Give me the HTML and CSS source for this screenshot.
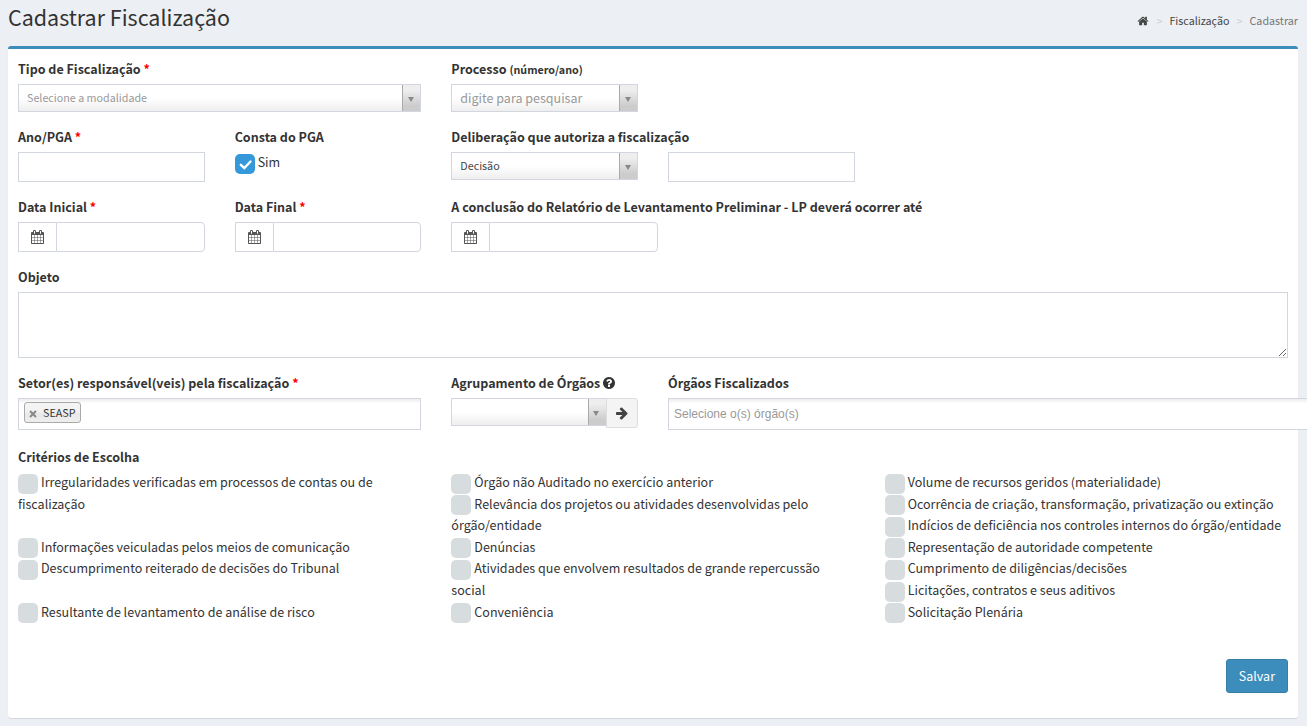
FILE: index.html
```html
<!DOCTYPE html>
<html lang="pt-BR">
<head>
<meta charset="utf-8">
<title>Cadastrar Fiscalização</title>
<link rel="stylesheet" href="styles.css">
</head>
<body>
<svg class="sprite" aria-hidden="true">
  <symbol id="i-home" viewBox="0 0 1664 1792"><path d="M1408 992v480q0 26-19 45t-45 19h-384v-384h-256v384h-384q-26 0-45-19t-19-45v-480q0-1 .5-3t.5-3l575-474 575 474q1 2 1 6zm223-69l-62 74q-8 9-21 11h-3q-13 0-21-7l-692-577-692 577q-12 8-24 7-13-2-21-11l-62-74q-8-10-7-23.5t11-21.5l719-599q32-26 76-26t76 26l244 204v-195q0-14 9-23t23-9h192q14 0 23 9t9 23v408l219 182q10 8 11 21.5t-7 23.5z"/></symbol>
  <symbol id="i-calendar" viewBox="64 0 1664 1792"><path d="M192 1664h288v-288h-288v288zm352 0h320v-288h-320v288zm-352-352h288v-320h-288v320zm352 0h320v-320h-320v320zm-352-384h288v-288h-288v288zm736 736h320v-288h-320v288zm-384-736h320v-288h-320v288zm768 736h288v-288h-288v288zm-384-352h320v-320h-320v320zm-352-864v-288q0-13-9.5-22.5t-22.5-9.5h-64q-13 0-22.500 9.500t-9.500 22.500v288q0 13 9.500 22.500t22.500 9.500h64q13 0 22.500-9.500t9.500-22.500zm736 864h288v-320h-288v320zm-384-384h320v-288h-320v288zm384 0h288v-288h-288v288zm32-480v-288q0-13-9.500-22.500t-22.500-9.500h-64q-13 0-22.500 9.500t-9.500 22.500v288q0 13 9.500 22.500t22.500 9.500h64q13 0 22.500-9.500t9.500-22.500zm384-64v1280q0 52-38 90t-90 38h-1408q-52 0-90-38t-38-90v-1280q0-52 38-90t90-38h128v-96q0-66 47-113t113-47h64q66 0 113 47t47 113v96h384v-96q0-66 47-113t113-47h64q66 0 113 47t47 113v96h128q52 0 90 38t38 90z"/></symbol>
  <symbol id="i-help" viewBox="128 0 1536 1792"><path d="M1024 1376v-192q0-14-9-23t-23-9h-192q-14 0-23 9t-9 23v192q0 14 9 23t23 9h192q14 0 23-9t9-23zm256-672q0-88-55.500-163t-138.500-116-170-41q-243 0-371 213-15 24 8 42l132 100q7 6 19 6 16 0 25-12 53-68 86-92 34-24 86-24 48 0 85.500 26t37.500 59q0 38-20 61t-68 45q-63 28-115.500 86.500t-52.500 125.500v36q0 14 9 23t23 9h192q14 0 23-9t9-23q0-19 21.500-49.500t54.500-49.500q32-18 49-28.500t46-35 44.500-48 28-60.500 12.500-81zm384 192q0 209-103 385.500t-279.500 279.500-385.500 103-385.500-103-279.500-279.500-103-385.500 103-385.500 279.500-279.500 385.500-103 385.500 103 279.500 279.500 103 385.500z"/></symbol>
  <symbol id="i-arrow" viewBox="0 0 1792 1792"><path d="M1600 960q0 54-37 91l-651 651q-39 37-91 37-51 0-90-37l-75-75q-38-38-38-91t38-91l293-293h-704q-52 0-84.500-37.500t-32.500-90.500v-128q0-53 32.500-90.500t84.500-37.500h704l-293-294q-38-36-38-90t38-90l75-75q38-38 90-38 53 0 91 38l651 651q37 35 37 90z"/></symbol>
</svg>

<header class="page-header">
  <h1 class="page-title">Cadastrar Fiscalização</h1>
  <nav class="breadcrumb" aria-label="Trilha">
    <a href="#" aria-label="Início"><svg class="icon-home"><use href="#i-home"/></svg></a>
    <span class="crumb-sep">&gt;</span>
    <a href="#">Fiscalização</a>
    <span class="crumb-sep">&gt;</span>
    <span class="crumb-current">Cadastrar</span>
  </nav>
</header>

<main class="box">
  <form class="form">
    <div class="row">
      <div class="field span-2">
        <label for="tipo">Tipo de Fiscalização <span class="req">*</span></label>
        <div class="select"><select id="tipo" class="placeholder"><option>Selecione a modalidade</option></select></div>
      </div>
      <div class="field">
        <label for="processo">Processo <small>(número/ano)</small></label>
        <div class="select"><select id="processo" class="placeholder search"><option>digite para pesquisar</option></select></div>
      </div>
    </div>

    <div class="row">
      <div class="field">
        <label for="ano">Ano/PGA <span class="req">*</span></label>
        <input id="ano" class="input" type="text">
      </div>
      <div class="field">
        <span class="caption">Consta do PGA</span>
        <label class="check"><input type="checkbox" checked>Sim</label>
      </div>
      <div class="field span-2 pair">
        <label for="deliberacao">Deliberação que autoriza a fiscalização</label>
        <div class="select"><select id="deliberacao"><option>Decisão</option></select></div>
        <input class="input" type="text" aria-label="Número da deliberação">
      </div>
    </div>

    <div class="row">
      <div class="field">
        <label for="inicio">Data Inicial <span class="req">*</span></label>
        <div class="date"><span class="addon"><svg class="icon icon-calendar"><use href="#i-calendar"/></svg></span><input id="inicio" class="input" type="text"></div>
      </div>
      <div class="field">
        <label for="fim">Data Final <span class="req">*</span></label>
        <div class="date"><span class="addon"><svg class="icon icon-calendar"><use href="#i-calendar"/></svg></span><input id="fim" class="input" type="text"></div>
      </div>
      <div class="field span-3">
        <label for="conclusao">A conclusão do Relatório de Levantamento Preliminar - LP deverá ocorrer até</label>
        <div class="date third"><span class="addon"><svg class="icon icon-calendar"><use href="#i-calendar"/></svg></span><input id="conclusao" class="input" type="text"></div>
      </div>
    </div>

    <div class="row">
      <div class="field span-6">
        <label for="objeto">Objeto</label>
        <textarea id="objeto" class="textarea"></textarea>
      </div>
    </div>

    <div class="row sectors">
      <div class="field span-2">
        <label for="setores">Setor(es) responsável(veis) pela fiscalização <span class="req">*</span></label>
        <div class="multi">
          <span class="chip"><button type="button" aria-label="Remover SEASP"><svg viewBox="0 0 8 8"><path d="M1 1l6 6M7 1L1 7"/></svg></button>SEASP</span>
          <input id="setores" type="text">
        </div>
      </div>
      <div class="field">
        <label for="grupo">Agrupamento de Órgãos <svg class="icon icon-help"><use href="#i-help"/></svg></label>
        <div class="group">
          <div class="select"><select id="grupo"><option></option></select></div>
          <button type="button" class="go" aria-label="Adicionar"><svg class="icon"><use href="#i-arrow"/></svg></button>
        </div>
      </div>
      <div class="field span-3 wide">
        <label for="orgaos">Órgãos Fiscalizados</label>
        <div class="multi"><input id="orgaos" type="text" placeholder="Selecione o(s) órgão(s)"></div>
      </div>
    </div>

    <fieldset class="criteria">
      <legend>Critérios de Escolha</legend>
      <div class="criteria-grid">
        <div class="column">
          <label class="check tall"><input type="checkbox">Irregularidades verificadas em processos de contas ou de fiscalização</label>
          <label class="check after-gap"><input type="checkbox">Informações veiculadas pelos meios de comunicação</label>
          <label class="check tall"><input type="checkbox">Descumprimento reiterado de decisões do Tribunal</label>
          <label class="check"><input type="checkbox">Resultante de levantamento de análise de risco</label>
        </div>
        <div class="column">
          <label class="check"><input type="checkbox">Órgão não Auditado no exercício anterior</label>
          <label class="check tall"><input type="checkbox">Relevância dos projetos ou atividades desenvolvidas pelo órgão/entidade</label>
          <label class="check"><input type="checkbox">Denúncias</label>
          <label class="check tall"><input type="checkbox">Atividades que envolvem resultados de grande repercussão social</label>
          <label class="check"><input type="checkbox">Conveniência</label>
        </div>
        <div class="column">
          <label class="check"><input type="checkbox">Volume de recursos geridos (materialidade)</label>
          <label class="check"><input type="checkbox">Ocorrência de criação, transformação, privatização ou extinção</label>
          <label class="check"><input type="checkbox">Indícios de deficiência nos controles internos do órgão/entidade</label>
          <label class="check"><input type="checkbox">Representação de autoridade competente</label>
          <label class="check"><input type="checkbox">Cumprimento de diligências/decisões</label>
          <label class="check"><input type="checkbox">Licitações, contratos e seus aditivos</label>
          <label class="check"><input type="checkbox">Solicitação Plenária</label>
        </div>
      </div>
    </fieldset>

    <div class="actions"><button type="submit" class="save">Salvar</button></div>
  </form>
</main>
</body>
</html>
```
FILE: styles.css
```css
* { box-sizing: border-box; }

/* font-size-adjust keeps the x-height of Source Sans Pro in its fallback */
body {
  margin: 0;
  padding: 0 9px 8px 8px;
  overflow-x: hidden;
  background: #ecf0f5;
  color: #333;
  font-family: "Source Sans Pro", "Noto Sans CJK SC", sans-serif;
  font-size: 14px;
  font-size-adjust: 0.486;
  line-height: 20px;
}

input, select, textarea, button { font: inherit; font-size-adjust: inherit; color: inherit; }

.sprite { position: absolute; width: 0; height: 0; }

.icon { width: 14px; height: 14px; fill: currentColor; vertical-align: -2px; }
.icon-calendar { width: 13px; }
.icon-help { width: 12px; }

.page-header {
  display: flex;
  justify-content: space-between;
  align-items: center;
  height: 46px;
  padding-bottom: 12px;
}

.page-title { margin: 0; font-size: 24px; font-weight: 400; line-height: 26px; }

.breadcrumb {
  display: flex;
  align-items: center;
  gap: 7px;
  padding-top: 8px;
  font-size: 12px;
}
.breadcrumb a { display: flex; color: #444; text-decoration: none; }
.icon-home { width: 12px; height: 12px; fill: #444; }
.crumb-sep { color: #ccc; }
.crumb-current { color: #777; }

.box {
  border-top: 3px solid #3c8dbc;
  border-radius: 3px;
  background: #fff;
  box-shadow: 0 1px 1px rgba(0, 0, 0, .1);
}

.form { padding: 10px 10px 25px; }

.row {
  display: grid;
  grid-template-columns: repeat(6, minmax(0, 1fr));
  column-gap: 30px;
  align-items: start;
  margin-bottom: 15px;
}
.sectors { margin-bottom: 17px; }

.span-2 { grid-column: span 2; }
.span-3 { grid-column: span 3; }
.span-6 { grid-column: span 6; }

.field > label, .caption, .criteria legend {
  display: block;
  margin-bottom: 5px;
  padding: 0;
  font-weight: 700;
  white-space: nowrap;
}
.field small { font-size: 12px; line-height: 12px; }
.req { color: #f00; }

.pair { display: grid; grid-template-columns: 1fr 1fr; column-gap: 30px; align-items: start; }
.pair > label { grid-column: span 2; }

.input {
  display: block;
  width: 100%;
  height: 30px;
  padding: 4px 8px;
  border: 1px solid #d2d6de;
  background: #fff;
}

.select { position: relative; }
.select select {
  display: block;
  width: 100%;
  height: 28px;
  padding: 0 26px 1px 8px;
  border: 1px solid #d2d6de;
  border-radius: 0;
  appearance: none;
  background:
    linear-gradient(#aaa, #aaa) right 17px top / 1px 100% no-repeat,
    linear-gradient(#eee 20%, #ccc 80%) right top / 17px 100% no-repeat,
    linear-gradient(#fff 20%, #fff 50%, #eee 100%);
  color: #444;
  font-size: 12px;
}
.select::after {
  content: "";
  position: absolute;
  top: 13px;
  right: 7px;
  border: 3px solid transparent;
  border-top: 5px solid #888;
  border-bottom: 0;
  pointer-events: none;
}
.select .placeholder { color: #999; }
.select .search { font-size: 14px; }

.date { display: flex; }
.date .input { border-radius: 0 4px 4px 0; }
.third { width: calc(100% / 3); }
.addon {
  display: flex;
  flex: 0 0 38px;
  align-items: center;
  justify-content: center;
  border: 1px solid #d2d6de;
  border-right: 0;
  color: #555;
}

.textarea {
  display: block;
  width: 100%;
  height: 66px;
  padding: 6px 12px;
  border: 1px solid #d2d6de;
}

.multi {
  display: flex;
  align-items: center;
  height: 32px;
  padding: 0 5px;
  border: 1px solid #d2d6de;
  background: linear-gradient(#eee 1%, #fff 15%) #fff;
}
.multi input {
  flex: 1;
  min-width: 0;
  padding: 0;
  border: 0;
  outline: 0;
  background: transparent;
  font-family: "Liberation Sans", Arial, sans-serif;
  font-size: 12px;
  font-size-adjust: none;
}
.multi input::placeholder { color: #999; }
.wide { margin-right: -45px; }

.chip {
  display: flex;
  align-items: center;
  gap: 6px;
  height: 21px;
  margin-bottom: 3px;
  padding: 0 5px 0 4px;
  border: 1px solid #aaa;
  border-radius: 3px;
  background: linear-gradient(#f4f4f4 20%, #f0f0f0 50%, #e8e8e8 52%, #eee 100%);
  font-size: 12px;
}
.chip button { display: flex; padding: 2px 0 0; border: 0; background: none; }
.chip svg { width: 8px; height: 8px; stroke: #888; stroke-width: 2; }

.group { display: flex; align-items: flex-start; }
.group .select { flex: 1; }
.group select { border-right: 0; }
.go {
  display: flex;
  align-items: center;
  justify-content: center;
  width: 32px;
  height: 30px;
  padding: 0;
  border: 1px solid #ddd;
  border-radius: 0 3px 3px 0;
  background: #f4f4f4;
  color: #444;
}

.criteria { min-width: 0; margin: 0; padding: 0; border: 0; }
.criteria-grid {
  display: grid;
  grid-template-columns: repeat(3, minmax(0, 1fr));
  grid-template-rows: repeat(7, auto);
  grid-auto-flow: column;
  column-gap: 30px;
}
.column {
  display: grid;
  grid-row: span 7;
  grid-template-rows: subgrid;
}
.tall { grid-row: span 2; }
.after-gap { grid-row: 4; }

.field > .check { margin: 0; font-weight: 400; }
.check { line-height: 19px; }
.check input {
  appearance: none;
  width: 20px;
  height: 20px;
  margin: 0 3px 0 0;
  border-radius: 5px;
  background: #d7dcde;
  vertical-align: middle;
}
.check input:checked {
  background: #3498db url("data:image/svg+xml,%3Csvg xmlns='http://www.w3.org/2000/svg' viewBox='0 0 20 20'%3E%3Cpath d='M5.800 10.800L9.300 14L15.500 7.500' fill='none' stroke='white' stroke-width='2.400' stroke-linecap='round'/%3E%3C/svg%3E") center / 20px 20px no-repeat;
}

.actions { display: flex; justify-content: flex-end; padding-top: 36px; }
.save {
  height: 34px;
  padding: 0 12px;
  border: 1px solid #367fa9;
  border-radius: 3px;
  background: #3c8dbc;
  color: #fff;
}
```
